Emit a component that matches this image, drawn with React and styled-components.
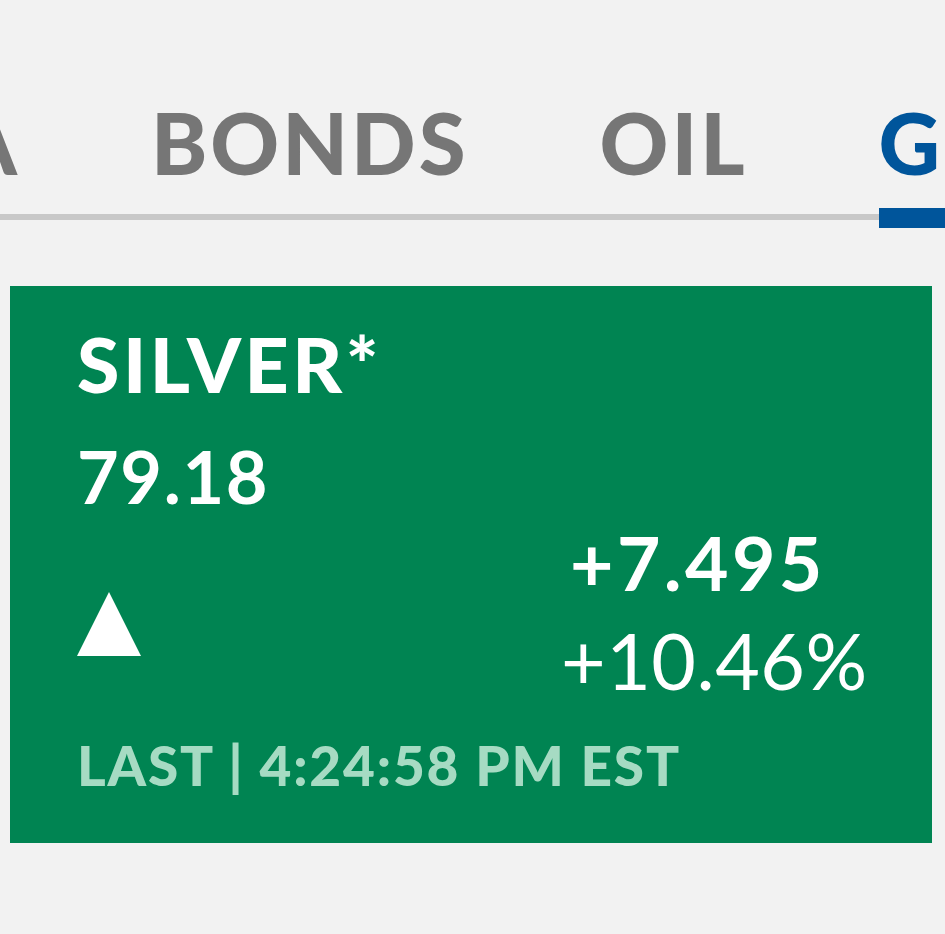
import React from "react";
import styled, { createGlobalStyle } from "styled-components";

const Global = createGlobalStyle`
  html, body { margin: 0; padding: 0; background: #f2f2f2; }
  body { font-family: "Lato", "Open Sans", sans-serif; overflow: hidden; }
`;

const Page = styled.div`
  width: 945px;
  height: 934px;
  background: #f2f2f2;
  overflow: hidden;
`;

const TabViewport = styled.nav`
  overflow: hidden;
  padding-top: 100px;
  background: linear-gradient(#c8c8c8, #c8c8c8) no-repeat 0 calc(100% - 8px) / 100% 6px;
`;

const TabList = styled.div`
  display: flex;
  gap: 131px;
  margin-left: ${(p) => p.$offset}px;
  width: max-content;
`;

const Tab = styled.div`
  font-size: 85px;
  line-height: 85px;
  font-weight: 900;
  letter-spacing: 3px;
  color: ${(p) => (p.$active ? "#00559b" : "#767676")};
  padding-bottom: 23px;
  border-bottom: 20px solid ${(p) => (p.$active ? "#00559b" : "transparent")};
  white-space: nowrap;
`;

const Card = styled.section`
  margin: 58px 0 0 10px;
  width: 922px;
  height: 557px;
  box-sizing: border-box;
  background: #008452;
  padding: 39px 0 0 67px;
  color: #ffffff;
  display: flex;
  flex-direction: column;
`;

const Name = styled.div`
  font-size: 77px;
  line-height: 77px;
  font-weight: 900;
  letter-spacing: 3.5px;
`;

const Body = styled.div`
  display: grid;
  grid-template-columns: 484px auto;
  margin-top: 38px;
`;

const LeftCol = styled.div`
  display: flex;
  flex-direction: column;
`;

const RightCol = styled.div`
  display: flex;
  flex-direction: column;
  align-items: flex-start;
  padding-top: 85px;
`;

const Price = styled.div`
  font-size: 72px;
  line-height: 72px;
  font-weight: 700;
  letter-spacing: 1.6px;
`;

const UpArrow = styled.div`
  width: 64px;
  height: 64px;
  margin-top: 80px;
  background: #ffffff;
  clip-path: polygon(50% 0, 100% 100%, 0 100%);
`;

const Change = styled.div`
  font-size: ${(p) => p.$size}px;
  line-height: ${(p) => p.$size}px;
  font-weight: ${(p) => p.$weight};
  letter-spacing: ${(p) => p.$spacing}px;
  margin-left: ${(p) => p.$indent || 0}px;
  margin-top: ${(p) => p.$gap || 0}px;
`;

const Footer = styled.div`
  margin-top: 39px;
  font-size: 55px;
  line-height: 55px;
  font-weight: 900;
  letter-spacing: 1.8px;
  color: #a6dbc3;
`;

export default function App() {
  return (
    <Page>
      <Global />
      <TabViewport>
        <TabList $offset={-184}>
          <Tab>ASIA</Tab>
          <Tab>BONDS</Tab>
          <Tab>OIL</Tab>
          <Tab $active>GOLD</Tab>
        </TabList>
      </TabViewport>
      <Card>
        <Name>SILVER*</Name>
        <Body>
          <LeftCol>
            <Price>79.18</Price>
            <UpArrow />
          </LeftCol>
          <RightCol>
            <Change $size={75} $weight={700} $spacing={3.4} $indent={9}>+7.495</Change>
            <Change $size={77} $weight={400} $spacing={0.5} $gap={22}>+10.46%</Change>
          </RightCol>
        </Body>
        <Footer>LAST | 4:24:58 PM EST</Footer>
      </Card>
    </Page>
  );
}
